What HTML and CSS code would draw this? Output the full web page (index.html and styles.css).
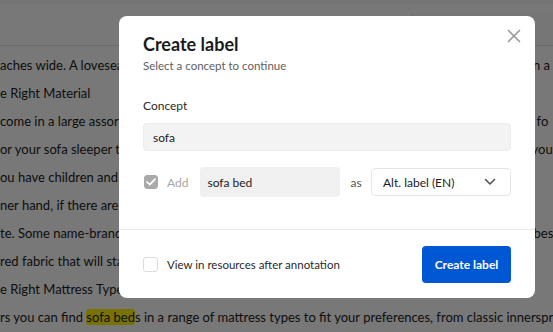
FILE: index.html
```html
<!DOCTYPE html>
<html>
<head>
    <title>Create label</title>
    <link rel="stylesheet" href="styles.css">
</head>
<body>
    <header class="topbar">
        <div class="topbar-side"></div>
    </header>
    <section class="doc">
        <p>aches wide. A loveseat <mark>so</mark>fa bed is usually between 52 and 72 inches wide, and is a good pick in a mo</p>
        <p>e Right Material</p>
        <p>come in a large assortment of upholstery fabrics, so choose one that is durable and also useful fo</p>
        <p>or your sofa sleeper think about who will be using it most of the time, since not every one fits you</p>
        <p>ou have children and pets, pick a performance fabric that resists stains and is easy to clean up</p>
        <p>ner hand, if there are no little ones around, a delicate velvet or linen weave or leather fabric</p>
        <p>te. Some name-brand manufacturers also offer their own coated fabrics, which are among the best</p>
        <p>red fabric that will stand up to daily wear and tear for many years while still looking good</p>
        <p>e Right Mattress Type</p>
        <p>rs you can find <mark>sofa bed</mark>s in a range of mattress types to fit your preferences, from classic innerspring mattresses</p>
    </section>

    <div class="overlay">
        <div class="modal">
            <div class="modal-body">
                <button class="close" aria-label="Close">
                    <svg width="14" height="14" viewBox="0 0 14 14"><path d="M1.5 1.5 L12.5 12.5 M12.5 1.5 L1.5 12.5" stroke="#9a9a9a" stroke-width="1.6" stroke-linecap="round"/></svg>
                </button>
                <h2 class="title">Create label</h2>
                <div class="subtitle">Select a concept to continue</div>

                <label class="field-label" for="concept">Concept</label>
                <input class="field" id="concept" type="text" value="sofa">

                <div class="add-row">
                    <span class="check checked">
                        <svg width="10" height="8" viewBox="0 0 10 8"><path d="M1 4 L3.8 6.6 L9 1.2" fill="none" stroke="#fff" stroke-width="1.7" stroke-linecap="round" stroke-linejoin="round"/></svg>
                    </span>
                    <span class="add-text">Add</span>
                    <input class="field alt" type="text" value="sofa bed">
                    <span class="as-text">as</span>
                    <div class="select">
                        <span>Alt. label (EN)</span>
                        <svg width="12" height="8" viewBox="0 0 12 8"><path d="M1.5 1.5 L6 6 L10.5 1.5" fill="none" stroke="#555" stroke-width="1.6" stroke-linecap="round" stroke-linejoin="round"/></svg>
                    </div>
                </div>
            </div>
            <div class="modal-footer">
                <label class="view-opt">
                    <span class="check"></span>
                    View in resources after annotation
                </label>
                <button class="primary">Create label</button>
            </div>
        </div>
    </div>
</body>
</html>
```

FILE: styles.css
```css
body {
    margin: 0;
    font-family: Lato, "Noto Sans", sans-serif;
    color: #1c1c1c;
    background: #fff;
    overflow: hidden;
    height: 332px;
}
.topbar {
    box-sizing: border-box;
    height: 46px;
    border-top: 4px solid #f6f6f6;
    border-bottom: 1px solid #e2e2e2;
    display: flex;
    justify-content: flex-end;
    align-items: flex-end;
}
.topbar-side {
    width: 140px;
    height: 31px;
    background: #fafafa;
    border-left: 1px solid #e6e6e6;
}
.doc {
    padding-top: 5px;
}
.doc p {
    margin: 0;
    font-size: 13px;
    line-height: 28px;
    white-space: nowrap;
    overflow: hidden;
}
mark {
    background: #fff200;
    color: inherit;
    border-radius: 3px;
}

.overlay {
    position: fixed;
    inset: 0;
    background: rgba(0, 0, 0, 0.53);
}
.modal {
    position: absolute;
    left: 119px;
    top: 16px;
    width: 416px;
    background: #fff;
    border-radius: 8px;
}
.modal-body {
    position: relative;
    padding: 17px 24px 32px;
}
.close {
    position: absolute;
    top: 13px;
    right: 14px;
    border: 0;
    background: none;
    padding: 0;
    width: 14px;
    height: 14px;
}
.title {
    margin: 0;
    font-size: 18px;
    line-height: 22px;
    font-weight: 700;
    color: #1b1b1b;
}
.subtitle {
    margin-top: 3px;
    font-size: 11.5px;
    line-height: 16px;
    color: #5e5e5e;
}
.field-label {
    display: block;
    margin-top: 24px;
    font-size: 12px;
    line-height: 16px;
    color: #2a2a2a;
}
.field {
    display: block;
    box-sizing: border-box;
    width: 100%;
    height: 28px;
    margin-top: 9px;
    padding: 0 9px;
    border: 1px solid #ececec;
    border-radius: 4px;
    background: #f3f3f3;
    font-family: inherit;
    font-size: 12px;
    color: #1c1c1c;
}
.add-row {
    display: flex;
    align-items: center;
    margin-top: 16px;
    height: 30px;
}
.check {
    box-sizing: border-box;
    display: inline-flex;
    align-items: center;
    justify-content: center;
    width: 15px;
    height: 15px;
    border: 1px solid #dcdcdc;
    border-radius: 3px;
    background: #fff;
    flex: none;
}
.check.checked {
    width: 14px;
    height: 14px;
    margin-left: 1px;
    background: #a9a9a9;
    border-color: #a9a9a9;
}
.add-text {
    margin-left: 9px;
    font-size: 12px;
    color: #a6a6a6;
}
.field.alt {
    width: 140px;
    height: 30px;
    margin: 0 0 0 12px;
    border: 0;
    background: #f0f0f0;
    padding: 0 7px;
}
.as-text {
    margin-left: 10px;
    font-size: 12px;
    color: #555;
}
.select {
    box-sizing: border-box;
    width: 140px;
    height: 28px;
    margin-left: auto;
    padding: 0 14px 0 11px;
    border: 1px solid #e6e6e6;
    border-radius: 4px;
    display: flex;
    align-items: center;
    justify-content: space-between;
    font-size: 12px;
    color: #1c1c1c;
}
.modal-footer {
    border-top: 1px solid #e8e8e8;
    padding: 16px 24px 15px;
    display: flex;
    align-items: center;
    justify-content: space-between;
}
.view-opt {
    display: flex;
    align-items: center;
    gap: 9px;
    font-size: 11.5px;
    color: #2a2a2a;
}
.primary {
    height: 37px;
    width: 89px;
    border: 0;
    border-radius: 4px;
    background: #0057d3;
    color: #fff;
    font-family: inherit;
    font-size: 12px;
    font-weight: 700;
}
```
